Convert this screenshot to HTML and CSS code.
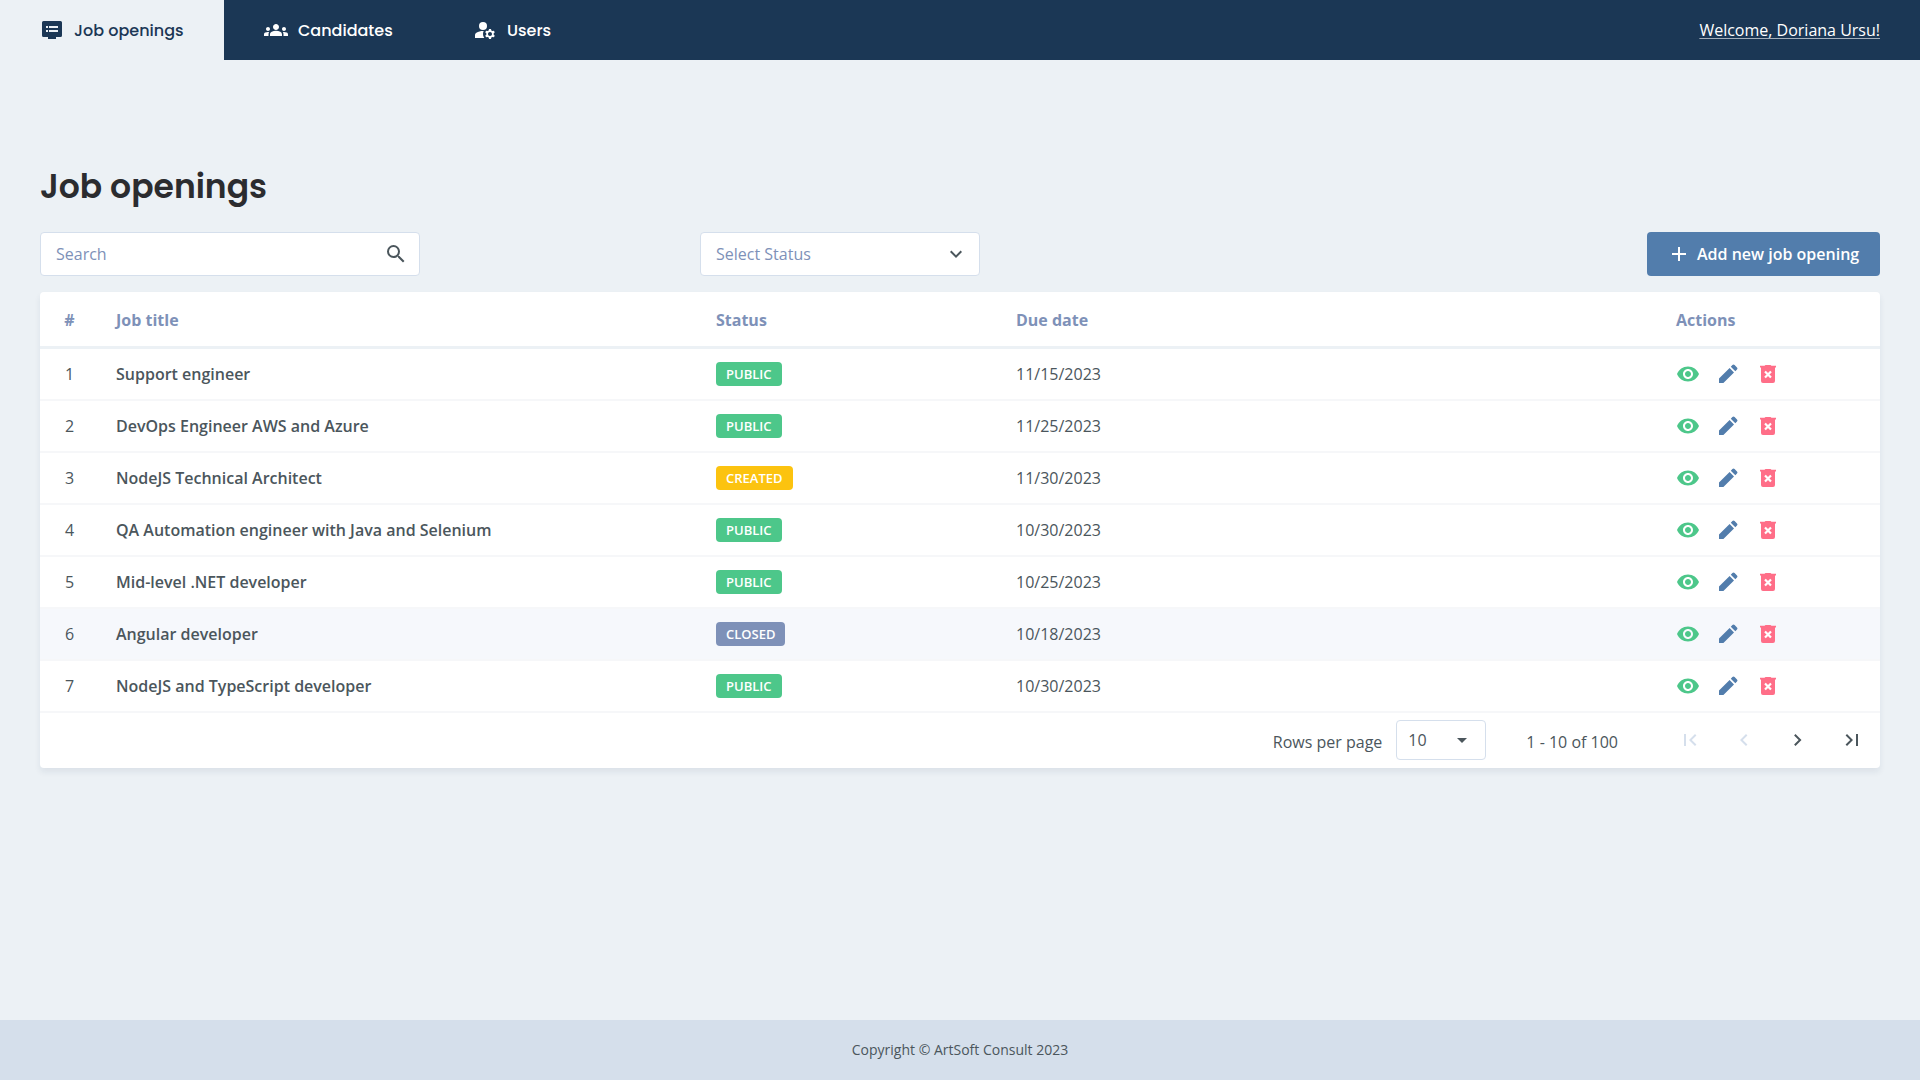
FILE: index.html
```html
<!DOCTYPE html>
<html lang="en">
<head>
  <meta charset="UTF-8">
  <title>Job openings</title>
  <link rel="stylesheet" href="styles.css">
</head>
<body>
  <!-- shared icons -->
  <svg class="sprite" width="0" height="0">
    <symbol id="eye" viewBox="0 0 24 24"><path d="M12 4.5C7 4.5 2.73 7.61 1 12c1.73 4.39 6 7.5 11 7.5s9.27-3.11 11-7.5c-1.73-4.39-6-7.5-11-7.5zM12 17c-2.76 0-5-2.24-5-5s2.24-5 5-5 5 2.24 5 5-2.24 5-5 5zm0-8c-1.66 0-3 1.34-3 3s1.34 3 3 3 3-1.34 3-3-1.34-3-3-3z"/></symbol>
    <symbol id="pencil" viewBox="0 0 24 24"><path d="M3 16.6V21h4.4L18 10.4 13.6 6zM21 7.6a1.6 1.6 0 0 0 0-2.2l-2.4-2.4a1.6 1.6 0 0 0-2.2 0l-1.6 1.7 4.5 4.5z"/></symbol>
    <symbol id="trash" viewBox="0 0 24 24"><path d="M20 3.7h-4.5L14.5 3h-5l-1 .7H4v1.9h1V19a2 2 0 0 0 2 2h10a2 2 0 0 0 2-2V5.6h1z"/><path class="cross" d="M9 9.5l6 6M15 9.5l-6 6"/></symbol>
  </svg>

  <nav class="navbar">
    <a class="tab active">
      <svg width="24" height="24" viewBox="0 0 24 24"><path fill-rule="evenodd" d="M3.5 3h17A1.5 1.5 0 0 1 22 4.5v13a1.5 1.5 0 0 1-1.5 1.5H16v2H8v-2H3.5A1.5 1.5 0 0 1 2 17.5v-13A1.5 1.5 0 0 1 3.5 3zM6 8v2h2V8zm3 0v2h9V8zm-3 4v2h2v-2zm3 0v2h9v-2z"/></svg>
      <span>Job openings</span>
    </a>
    <a class="tab candidates">
      <svg width="24" height="24" viewBox="0 0 24 24"><path d="M12 12.75c1.63 0 3.07.39 4.24.9 1.08.48 1.76 1.56 1.76 2.73V18H6v-1.61c0-1.18.68-2.26 1.76-2.73 1.17-.52 2.61-.91 4.24-.91zM4 13c1.1 0 2-.9 2-2s-.9-2-2-2-2 .9-2 2 .9 2 2 2zm1.13 1.1C4.76 14.04 4.39 14 4 14c-.99 0-1.93.21-2.78.58C.48 14.9 0 15.62 0 16.43V18h4.5v-1.61c0-.83.23-1.61.63-2.29zM20 13c1.1 0 2-.9 2-2s-.9-2-2-2-2 .9-2 2 .9 2 2 2zm4 3.43c0-.81-.48-1.53-1.22-1.85-.85-.37-1.79-.58-2.78-.58-.39 0-.76.04-1.13.1.4.68.63 1.46.63 2.29V18H24v-1.57zM12 6c1.66 0 3 1.34 3 3s-1.34 3-3 3-3-1.34-3-3 1.34-3 3-3z"/></svg>
      <span>Candidates</span>
    </a>
    <a class="tab users">
      <svg width="24" height="24" viewBox="0 0 24 24"><circle cx="10" cy="8" r="4"/><path d="M10.67 13.02C10.45 13.01 10.23 13 10 13c-2.42 0-4.68.67-6.61 1.82C2.51 15.34 2 16.32 2 17.35V20h9.26A6.96 6.96 0 0 1 10 16c0-1.07.25-2.07.67-2.98zM20.75 16c0-.22-.03-.42-.06-.63l1.14-1.01-1-1.73-1.45.49c-.32-.27-.68-.48-1.08-.63L18 11h-2l-.3 1.49c-.4.15-.76.36-1.08.63l-1.45-.49-1 1.73 1.14 1.01c-.03.21-.06.41-.06.63s.03.42.06.63l-1.14 1.01 1 1.73 1.45-.49c.32.27.68.48 1.08.63L16 21h2l.3-1.49c.4-.15.76-.36 1.08-.63l1.45.49 1-1.73-1.14-1.01c.03-.21.06-.41.06-.63zM17 18c-1.1 0-2-.9-2-2s.9-2 2-2 2 .9 2 2-.9 2-2 2z"/></svg>
      <span>Users</span>
    </a>
    <a class="welcome">Welcome, Doriana Ursu!</a>
  </nav>

  <main>
    <h1>Job openings</h1>

    <div class="toolbar">
      <div class="field search">
        <span>Search</span>
        <svg width="24" height="24" viewBox="0 0 24 24"><path d="M15.5 14h-.79l-.28-.27A6.47 6.47 0 0 0 16 9.5 6.5 6.5 0 1 0 9.5 16c1.61 0 3.09-.59 4.23-1.57l.27.28v.79l5 4.99L20.49 19l-4.99-5zm-6 0C7.01 14 5 11.99 5 9.5S7.01 5 9.5 5 14 7.01 14 9.5 11.99 14 9.5 14z"/></svg>
      </div>
      <div class="field status">
        <span>Select Status</span>
        <svg width="24" height="24" viewBox="0 0 24 24"><path d="M7.41 8.59L12 13.17l4.59-4.58L18 10l-6 6-6-6z"/></svg>
      </div>
      <button class="add">
        <svg width="24" height="24" viewBox="0 0 24 24"><path d="M19 13h-6v6h-2v-6H5v-2h6V5h2v6h6z"/></svg>
        <span>Add new job opening</span>
      </button>
    </div>

    <section class="card">
      <div class="row head">
        <span class="num">#</span><span>Job title</span><span>Status</span><span>Due date</span><span>Actions</span>
      </div>
      <div id="rows"></div>

      <div class="pagination">
        <span class="label">Rows per page</span>
        <div class="page-size">
          <span>10</span>
          <svg width="24" height="24" viewBox="0 0 24 24"><path d="M7 10l5 5 5-5z"/></svg>
        </div>
        <span class="label">1 - 10 of 100</span>
        <div class="pager">
          <svg class="disabled" width="24" height="24" viewBox="0 0 24 24"><path d="M18.41 16.59L13.82 12l4.59-4.59L17 6l-6 6 6 6zM6 6h2v12H6z"/></svg>
          <svg class="disabled" width="24" height="24" viewBox="0 0 24 24"><path d="M15.41 7.41L14 6l-6 6 6 6 1.41-1.41L10.83 12z"/></svg>
          <svg width="24" height="24" viewBox="0 0 24 24"><path d="M9.5 6L8.09 7.41 12.67 12l-4.58 4.59L9.5 18l6-6z"/></svg>
          <svg width="24" height="24" viewBox="0 0 24 24"><path d="M5.59 7.41L10.18 12l-4.59 4.59L7 18l6-6-6-6zM16 6h2v12h-2z"/></svg>
        </div>
      </div>
    </section>
  </main>

  <footer>Copyright © ArtSoft Consult 2023</footer>

  <script>
    const jobs = [
      ['Support engineer', 'public', '11/15/2023'],
      ['DevOps Engineer AWS and Azure', 'public', '11/25/2023'],
      ['NodeJS Technical Architect', 'created', '11/30/2023'],
      ['QA Automation engineer with Java and Selenium', 'public', '10/30/2023'],
      ['Mid-level .NET developer', 'public', '10/25/2023'],
      ['Angular developer', 'closed', '10/18/2023'],
      ['NodeJS and TypeScript developer', 'public', '10/30/2023']
    ];

    document.getElementById('rows').innerHTML = jobs.map(([title, status, date], i) => `
      <div class="row ${status === 'closed' ? 'muted' : ''}">
        <span class="num">${i + 1}</span>
        <span class="title">${title}</span>
        <span><b class="badge ${status}">${status.toUpperCase()}</b></span>
        <span>${date}</span>
        <span class="actions">
          <svg class="view" width="24" height="24"><use href="#eye"/></svg>
          <svg class="edit" width="24" height="24"><use href="#pencil"/></svg>
          <svg class="delete" width="24" height="24"><use href="#trash"/></svg>
        </span>
      </div>`).join('');
  </script>
</body>
</html>
```
FILE: styles.css
```css
* {
  box-sizing: border-box;
}

body {
  margin: 0;
  min-height: 100vh;
  display: flex;
  flex-direction: column;
  background: #ecf1f5;
  color: #4b565c;
  font-family: "Open Sans", sans-serif;
  font-size: 16px;
  line-height: 24px;
}

svg {
  fill: currentColor;
  flex-shrink: 0;
}

.sprite {
  display: none;
}

.navbar {
  display: flex;
  height: 60px;
  background: #1b3755;
  color: white;
}

.tab {
  display: flex;
  align-items: center;
  gap: 10px;
  padding: 0 40px;
  font-family: "Poppins", "Inter", sans-serif;
  font-weight: 500;
  white-space: nowrap;
}

.tab span {
  padding-top: 1px;
}

.tab.active {
  width: 224px;
  background: #ecf1f5;
  color: #1b3755;
}

.tab.candidates {
  width: 209px;
}

.welcome {
  margin: auto 40px auto auto;
  text-decoration: underline rgba(255, 255, 255, 0.6);
  text-decoration-thickness: 1px;
  text-underline-offset: 2px;
}

main {
  flex: 1;
  padding: 103px 40px 0;
}

h1 {
  margin: 0 0 21px;
  color: #2b2c2f;
  font-family: "Poppins", "Inter", sans-serif;
  font-size: 33px;
  font-weight: 600;
  line-height: 48px;
}

.toolbar {
  display: flex;
  align-items: center;
  margin-bottom: 16px;
}

.field {
  display: flex;
  align-items: center;
  justify-content: space-between;
  height: 44px;
  padding: 0 11px 0 15px;
  background: white;
  border: 1px solid #d5dfec;
  border-radius: 4px;
}

.field span {
  color: #7e91b8;
}

.search {
  width: 380px;
}

.status {
  width: 280px;
  margin-left: 280px;
}

.add {
  display: flex;
  align-items: center;
  gap: 6px;
  width: 233px;
  height: 44px;
  margin-left: auto;
  padding: 0 20px;
  border: none;
  border-radius: 4px;
  background: #527dac;
  color: white;
  font: 600 16px "Open Sans", sans-serif;
  white-space: nowrap;
}

.card {
  background: white;
  border-radius: 4px;
  box-shadow: 0 4px 6px rgba(27, 55, 85, 0.08);
}

.row {
  display: grid;
  grid-template-columns: 52px 600px 300px 660px 1fr;
  align-items: center;
  height: 52px;
  padding-left: 24px;
  border-bottom: 2px solid #f6f7f9;
}

.head {
  height: 57px;
  padding-top: 2px;
  border-bottom: 3px solid #ecf1f5;
  color: #7e91b8;
  font-weight: 700;
}

.muted {
  background: #f6f8fc;
}

.num {
  width: 11px;
  text-align: center;
}

.title {
  font-weight: 600;
}

.badge {
  display: block;
  width: max-content;
  height: 24px;
  padding: 0 10px;
  border-radius: 4px;
  color: white;
  font-size: 13px;
  font-weight: 600;
}

.public {
  background: #4dc78a;
}

.created {
  background: #fcc30f;
}

.closed {
  background: #7e91b8;
}

.actions {
  display: flex;
  gap: 16px;
  padding-bottom: 1px;
}

.view {
  color: #4dc78a;
}

.edit {
  color: #527dac;
}

.delete {
  color: #ff6e88;
}

.cross {
  fill: none;
  stroke: white;
  stroke-width: 2.2;
}

.pagination {
  display: flex;
  align-items: center;
  justify-content: flex-end;
  height: 55px;
  padding: 0 16px 2px 0;
}

.label {
  padding-top: 4px;
}

.page-size {
  display: flex;
  align-items: center;
  justify-content: space-between;
  width: 90px;
  height: 40px;
  margin: 0 40px 0 14px;
  padding: 0 11px;
  border: 1px solid #d5dfec;
  border-radius: 4px;
}

.pager {
  display: flex;
  gap: 30px;
  margin-left: 60px;
}

.disabled {
  color: #d5dfec;
}

footer {
  height: 60px;
  background: #d5dfeb;
  font-size: 14px;
  line-height: 60px;
  text-align: center;
}
```
